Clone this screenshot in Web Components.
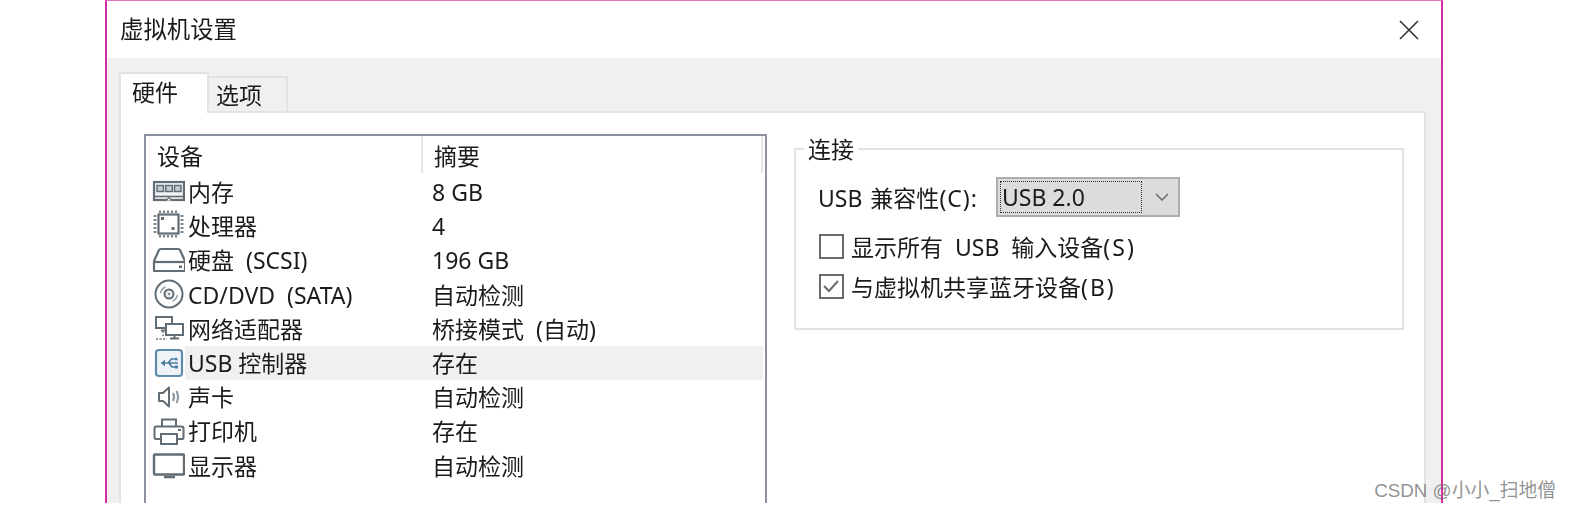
<!DOCTYPE html>
<html lang="zh">
<head>
<meta charset="utf-8">
<title>虚拟机设置</title>
<style>
    html, body { margin: 0; padding: 0; background: #fff; }
    body {
        width: 1570px;
        height: 510px;
        overflow: hidden;
        position: relative;
        font-family: "Noto Sans", "Noto Sans CJK SC", sans-serif;
        color: #1b1b1b;
    }
    /* the access key brackets run wider in the original font */
    .key { letter-spacing: 2px; }
</style>
</head>
<body>
<vm-dialog heading="虚拟机设置">
    <vm-tabs slot="tabs"></vm-tabs>
    <device-list>
        <device-row icon="memory" summary="8 GB">内存</device-row>
        <device-row icon="cpu" summary="4">处理器</device-row>
        <device-row icon="disk" summary="196 GB" spaced>硬盘 (SCSI)</device-row>
        <device-row icon="cd" summary="自动检测" spaced>CD/DVD (SATA)</device-row>
        <device-row icon="net" summary="桥接模式 (自动)">网络适配器</device-row>
        <device-row icon="usb" summary="存在" selected>USB 控制器</device-row>
        <device-row icon="sound" summary="自动检测">声卡</device-row>
        <device-row icon="printer" summary="存在">打印机</device-row>
        <device-row icon="display" summary="自动检测">显示器</device-row>
    </device-list>
    <conn-group legend="连接">
        <vm-combo label="USB 兼容性" key="(C):" value="USB 2.0"></vm-combo>
        <vm-check>显示所有 USB 输入设备<span class="key">(S)</span></vm-check>
        <vm-check checked>与虚拟机共享蓝牙设备<span class="key">(B)</span></vm-check>
    </conn-group>
</vm-dialog>
<csdn-mark>CSDN @小小_扫地僧</csdn-mark>

<script>
// icons are drawn on a 39x34 box, the icon column of a row
const ICONS = {
    memory: `
        <rect x="8" y="7" width="30" height="18" fill="#f1f3f4" stroke="#626c75" stroke-width="2.2"/>
        <path d="M7 21.5h32" stroke="#626c75" stroke-width="1.6"/>
        <rect x="11" y="10.5" width="6.5" height="6" fill="#c6ccd1" stroke="#626c75" stroke-width="1.5"/>
        <rect x="19.8" y="10.5" width="6.5" height="6" fill="#c6ccd1" stroke="#626c75" stroke-width="1.5"/>
        <rect x="28.5" y="10.5" width="6.5" height="6" fill="#c6ccd1" stroke="#626c75" stroke-width="1.5"/>
        <path d="M20 25.5l3-3 3 3" fill="#fff" stroke="#626c75" stroke-width="1.2"/>`,
    cpu: `
        <rect x="12.5" y="5.5" width="20" height="19" fill="#fff" stroke="#626c75" stroke-width="2.2"/>
        <path d="M14 1.5v2.5M18 1.5v2.5M22 1.5v2.5M26 1.5v2.5M30 1.5v2.5M14 26v2.5M18 26v2.5M22 26v2.5M26 26v2.5M30 26v2.5M7.5 7h3M7.5 11h3M7.5 15h3M7.5 19h3M7.5 23h3M34.5 7h3M34.5 11h3M34.5 15h3M34.5 19h3M34.5 23h3" stroke="#7b858e" stroke-width="2.2"/>
        <rect x="15" y="8" width="3" height="3" fill="#626c75"/>
        <rect x="25.5" y="18" width="3" height="3" fill="#626c75"/>`,
    disk: `
        <path d="M8 18l5-11q.5-1 2-1h17q1.5 0 2 1l5 11v10h-31z" fill="#fff" stroke="#626c75" stroke-width="2.2" stroke-linejoin="round"/>
        <path d="M8 19h31" stroke="#626c75" stroke-width="2.2"/>
        <rect x="33" y="22.5" width="3" height="2.5" fill="#626c75"/>`,
    cd: `
        <circle cx="23" cy="16" r="13.5" fill="#fff" stroke="#626c75" stroke-width="2"/>
        <circle cx="23" cy="16" r="4.5" fill="#e8ebed" stroke="#626c75" stroke-width="2"/>
        <circle cx="23" cy="16" r="1" fill="#626c75"/>
        <path d="M14.5 15a8.5 8.5 0 0 1 5-6M31.5 17a8.5 8.5 0 0 1-5 6" fill="none" stroke="#9aa2a9" stroke-width="1.5"/>`,
    net: `
        <rect x="10" y="5" width="16" height="11" fill="#fff" stroke="#626c75" stroke-width="2"/>
        <path d="M15 18.5h7" stroke="#626c75" stroke-width="2"/>
        <rect x="20" y="12" width="17" height="11" fill="#fff" stroke="#626c75" stroke-width="2"/>
        <path d="M28.5 23v3M24 26.5h9" stroke="#626c75" stroke-width="2"/>
        <path d="M17 19v5M10 27h11" stroke="#8a939b" stroke-width="2" stroke-dasharray="2 1.5"/>`,
    usb: `
        <rect x="10" y="4" width="26" height="26" rx="3" fill="#eef3f7" stroke="#5f8bab" stroke-width="2.2"/>
        <path d="M16 17h16M22 17l3.5-4h3M23 17l3 4h3.5" fill="none" stroke="#4f7d9e" stroke-width="1.7"/>
        <path d="M14.5 17l4.5-3.2v6.4z" fill="#4f7d9e"/>
        <circle cx="30" cy="13" r="1.6" fill="#4f7d9e"/>
        <rect x="29" y="19.5" width="3" height="3" fill="#4f7d9e"/>`,
    sound: `
        <path d="M13 13h4l6-5.5v19l-6-5.5h-4z" fill="#fff" stroke="#626c75" stroke-width="2" stroke-linejoin="round"/>
        <path d="M27 13q2 4 0 8M30.5 11q3 6 0 12" fill="none" stroke="#8a939b" stroke-width="2"/>`,
    printer: `
        <path d="M16 12v-6.5h14v6.5" fill="#fff" stroke="#626c75" stroke-width="2"/>
        <path d="M15 25h-5q-1.5 0-1.5-1.5v-9q0-2 2-2h25q2 0 2 2v9q0 1.5-1.5 1.5h-5" fill="#fff" stroke="#626c75" stroke-width="2"/>
        <rect x="15" y="20" width="16" height="10" fill="#fff" stroke="#626c75" stroke-width="2"/>
        <path d="M32 16h3" stroke="#626c75" stroke-width="2"/>`,
    display: `
        <rect x="8" y="5.5" width="30" height="20" rx="1" fill="#fff" stroke="#626c75" stroke-width="2.4"/>
        <path d="M18 28h11" stroke="#626c75" stroke-width="2.5"/>`
};

class VmDialog extends HTMLElement {
    constructor() {
        super();
        this.attachShadow({ mode: 'open' });
        this.shadowRoot.innerHTML = `
            <style>
                :host {
                    display: flex;
                    flex-direction: column;
                    box-sizing: border-box;
                    width: 1338px;
                    height: 503px;
                    margin-left: 105px;
                    border: 2px solid #d62ba0;
                    border-top: 1px solid #e774c0;
                    border-bottom: 0;
                    background: #f0f0f0;
                    overflow: hidden;
                    filter: blur(0.35px); /* the reference is an upscaled capture */
                }
                .title {
                    flex: none;
                    height: 57px;
                    background: #fff;
                    display: flex;
                    align-items: center;
                    justify-content: space-between;
                    padding: 0 22px 0 13px;
                    font-size: 23.4px;
                    line-height: 1;
                }
                .close { width: 20px; height: 20px; display: block; }
                .body {
                    flex: 1;
                    min-height: 0;
                    display: flex;
                    flex-direction: column;
                    padding: 16px 15px 0 12px;
                }
                .panel {
                    flex: 1;
                    min-height: 0;
                    display: flex;
                    align-items: flex-start;
                    gap: 27px;
                    box-sizing: border-box;
                    background: #fff;
                    border: 2px solid #e3e3e3;
                    border-bottom: 0;
                    padding: 21px 20px 0 23px;
                }
            </style>
            <div class="title">
                <span>${this.getAttribute('heading')}</span>
                <svg class="close" viewBox="0 0 20 20"><path d="M1 1l18 18M19 1L1 19" stroke="#333" stroke-width="1.6" fill="none"/></svg>
            </div>
            <div class="body">
                <slot name="tabs"></slot>
                <div class="panel"><slot></slot></div>
            </div>`;
    }
}

class VmTabs extends HTMLElement {
    constructor() {
        super();
        this.attachShadow({ mode: 'open' });
        this.shadowRoot.innerHTML = `
            <style>
                :host {
                    display: flex;
                    align-items: flex-end;
                    height: 39px;
                    margin-bottom: -2px;
                    position: relative;
                    z-index: 1;
                    font-size: 23px;
                }
                .tab { box-sizing: border-box; display: flex; align-items: center; }
                .on {
                    width: 90px;
                    height: 41px;
                    background: #fff;
                    border: 2px solid #e3e3e3;
                    border-bottom: 0;
                    padding: 0 0 6px 11px;
                }
                .off {
                    width: 79px;
                    height: 37px;
                    background: #f0f0f0;
                    border: 2px solid #e3e3e3;
                    border-left: 0;
                    padding: 0 0 2px 7px;
                }
            </style>
            <div class="tab on">硬件</div>
            <div class="tab off">选项</div>`;
    }
}

class DeviceList extends HTMLElement {
    constructor() {
        super();
        this.attachShadow({ mode: 'open' });
        this.shadowRoot.innerHTML = `
            <style>
                :host {
                    display: block;
                    flex: none;
                    box-sizing: border-box;
                    width: 623px;
                    height: 370px;
                    background: #fff;
                    border: 2px solid #8b919e;
                    border-bottom: 0;
                    font-size: 23px;
                }
                .head {
                    display: grid;
                    grid-template-columns: 277px 340px 1fr;
                    height: 39px;
                    line-height: 41px;
                }
                .head div { padding-left: 11px; border-right: 2px solid #e6e6e6; height: 37px; box-sizing: border-box; }
                .head div:last-child { border: 0; }
                .rows { display: grid; grid-auto-rows: 34.2px; }
            </style>
            <div class="head"><div>设备</div><div>摘要</div><div></div></div>
            <div class="rows"><slot></slot></div>`;
    }
}

class DeviceRow extends HTMLElement {
    constructor() {
        super();
        this.attachShadow({ mode: 'open' });
        const bg = this.hasAttribute('selected') ? '#f0f0f0' : 'transparent';
        const summary = this.getAttribute('summary');
        const gap = /[^\x00-\x7f]/.test(summary) ? '6px' : '0';
        const nameGap = this.hasAttribute('spaced') ? '6px' : '0';
        this.shadowRoot.innerHTML = `
            <style>
                :host {
                    display: grid;
                    grid-template-columns: 39px 1fr;
                    width: 617px;
                    line-height: 34px;
                    white-space: nowrap;
                }
                svg { width: 39px; height: 34px; display: block; }
                .cells {
                    display: grid;
                    grid-template-columns: 244px 1fr;
                    background: ${bg};
                    padding-left: 3px;
                }
                .name { word-spacing: ${nameGap}; }
                .sum { word-spacing: ${gap}; }
            </style>
            <svg viewBox="0 0 39 34">${ICONS[this.getAttribute('icon')]}</svg>
            <div class="cells"><span class="name"><slot></slot></span><span class="sum">${summary}</span></div>`;
    }
}

class ConnGroup extends HTMLElement {
    constructor() {
        super();
        this.attachShadow({ mode: 'open' });
        this.shadowRoot.innerHTML = `
            <style>
                :host { display: block; flex: none; width: 610px; margin-top: 1px; font-size: 23px; }
                fieldset {
                    margin: 0;
                    box-sizing: border-box;
                    height: 195px;
                    border: 2px solid #e3e3e3;
                    padding: 14px 0 0 22px;
                }
                legend { padding: 0 4px; margin-left: -14px; line-height: 28px; }
            </style>
            <fieldset>
                <legend>${this.getAttribute('legend')}</legend>
                <slot></slot>
            </fieldset>`;
    }
}

class VmCombo extends HTMLElement {
    constructor() {
        super();
        this.attachShadow({ mode: 'open' });
        this.shadowRoot.innerHTML = `
            <style>
                :host { display: flex; align-items: center; height: 40px; margin-bottom: 9px; white-space: nowrap; }
                .label { width: 178px; flex: none; word-spacing: 2px; }
                .key { letter-spacing: 1px; }
                .box {
                    box-sizing: border-box;
                    width: 184px;
                    height: 40px;
                    background: #dcdcdc;
                    border: 2px solid #adadad;
                    padding: 2px;
                    display: flex;
                    align-items: center;
                }
                .value {
                    box-sizing: border-box;
                    width: 142px;
                    height: 32px;
                    line-height: 31px;
                    padding-left: 1px;
                    border: 1px dotted #333;
                }
                .arrow { width: 14px; height: 8px; margin-left: 13px; display: block; }
            </style>
            <span class="label">${this.getAttribute('label')}<span class="key">${this.getAttribute('key')}</span></span>
            <div class="box">
                <div class="value">${this.getAttribute('value')}</div>
                <svg class="arrow" viewBox="0 0 14 8"><path d="M1 1l6 6 6-6" stroke="#6a6a6a" stroke-width="1.5" fill="none"/></svg>
            </div>`;
    }
}

class VmCheck extends HTMLElement {
    constructor() {
        super();
        this.attachShadow({ mode: 'open' });
        const mark = this.hasAttribute('checked')
            ? '<path d="M5 12l5 5 9-10" stroke="#6a6a6a" stroke-width="2" fill="none"/>' : '';
        this.shadowRoot.innerHTML = `
            <style>
                :host { display: flex; align-items: center; height: 40px; gap: 7px; padding-left: 1px; white-space: nowrap; word-spacing: 6px; }
                svg { width: 25px; height: 25px; flex: none; display: block; }
            </style>
            <svg viewBox="0 0 25 25"><rect x="1" y="1" width="23" height="23" fill="#fff" stroke="#6a6a6a" stroke-width="2"/>${mark}</svg>
            <span><slot></slot></span>`;
    }
}

class CsdnMark extends HTMLElement {
    constructor() {
        super();
        this.attachShadow({ mode: 'open' });
        this.shadowRoot.innerHTML = `
            <style>
                :host {
                    position: absolute;
                    right: 14px;
                    top: 478px;
                    font: 18.8px/26px "Liberation Sans", "Noto Sans CJK SC", sans-serif;
                    color: rgba(110, 110, 110, 0.75);
                    white-space: nowrap;
                }
            </style>
            <slot></slot>`;
    }
}

customElements.define('vm-dialog', VmDialog);
customElements.define('vm-tabs', VmTabs);
customElements.define('device-list', DeviceList);
customElements.define('device-row', DeviceRow);
customElements.define('conn-group', ConnGroup);
customElements.define('vm-combo', VmCombo);
customElements.define('vm-check', VmCheck);
customElements.define('csdn-mark', CsdnMark);
</script>
</body>
</html>
